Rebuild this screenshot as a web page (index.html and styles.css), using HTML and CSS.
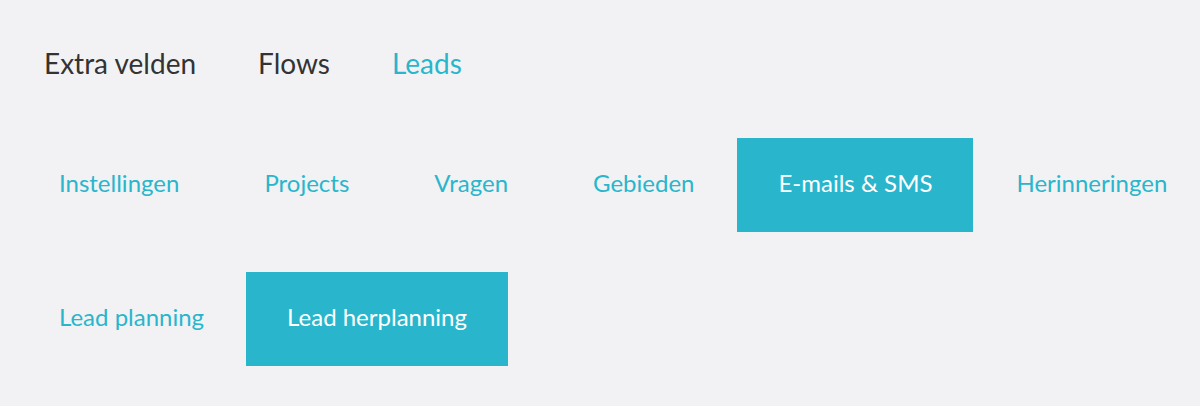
FILE: index.html
```html
<!DOCTYPE html>
<html lang="nl">
<head>
<meta charset="UTF-8">
<title>Leads instellingen</title>
<link rel="stylesheet" href="styles.css">
</head>
<body>

<nav class="tabs">
  <a href="#">Extra velden</a>
  <a href="#">Flows</a>
  <a href="#" class="actief">Leads</a>
</nav>

<ul class="subtabs">
  <li><a href="#">Instellingen</a></li>
  <li><a href="#">Projects</a></li>
  <li><a href="#">Vragen</a></li>
  <li><a href="#">Gebieden</a></li>
  <li><a href="#" class="actief">E-mails &amp; SMS</a></li>
  <li><a href="#">Herinneringen</a></li>
</ul>

<ul class="subtabs">
  <li><a href="#">Lead planning</a></li>
  <li><a href="#" class="actief">Lead herplanning</a></li>
</ul>

</body>
</html>
```

FILE: styles.css
```css
body, html {
  margin: 0;
  padding: 0;
  overflow: hidden;
  font-family: Lato, 'Open Sans', sans-serif;
  background: #f2f2f4;
  height: 100%;
}
a {
  text-decoration: none;
}
.tabs {
  display: flex;
  gap: 62px;
  padding: 44px 0 0 44px;
  height: 61px;
}
.tabs a {
  font-size: 28px;
  line-height: 38px;
  color: #333;
}
.tabs a.actief {
  color: #29b6cc;
}
.subtabs {
  list-style: none;
  margin: 33px 0 0 17px;
  padding: 0;
  display: flex;
  gap: 1px;
  overflow: hidden;
}
.subtabs li {
  flex-shrink: 0;
}
.subtabs + .subtabs {
  margin-top: 40px;
  gap: 0;
}
.subtabs a {
  display: block;
  height: 90px;
  line-height: 90px;
  padding: 0 42px 4px;
  font-size: 24px;
  color: #29b6cc;
}
.subtabs a.actief {
  background: #29b6cc;
  color: #fff;
  padding: 0 41px 4px;
}
```
